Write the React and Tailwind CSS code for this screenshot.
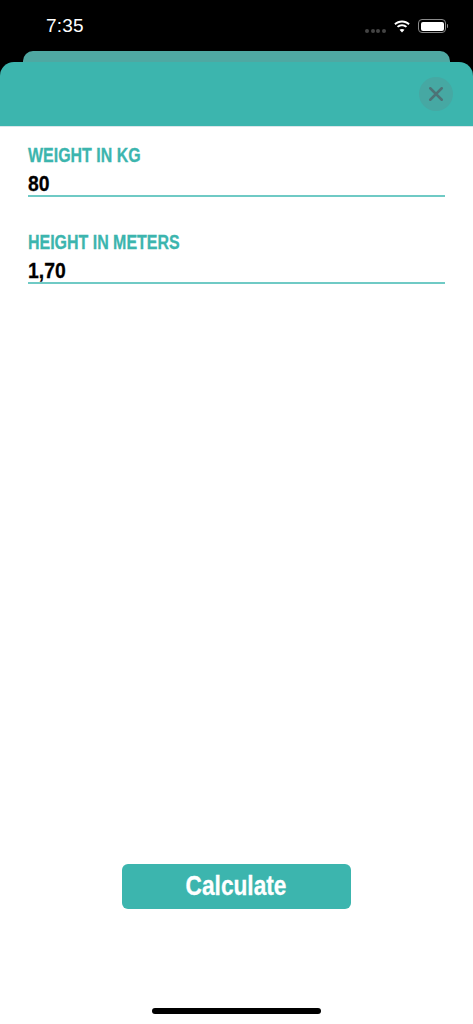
import React from 'react';

function Field({ label, value, className }) {
  return (
    <div className={className}>
      <div className="h-[20px] origin-left scale-x-[0.76] whitespace-nowrap text-[21px] leading-[20px] font-bold text-[#3cb5ae] [-webkit-text-stroke:0.3px_#3cb5ae]">{label}</div>
      <div className="mt-[7px] h-[23px] origin-left scale-x-[0.88] text-[22px] leading-[24px] font-bold text-black [-webkit-text-stroke:0.3px_black]">{value}</div>
      <div className="h-[2px] bg-[#6fcac5]" />
    </div>
  );
}

export default function App() {
  return (
    <div className="flex h-[1024px] w-[473px] flex-col overflow-hidden bg-white font-['Liberation_Sans',Arial,sans-serif]">
      <div className="bg-black">
        <div className="flex h-[51px] items-start justify-between pt-[14px] pr-[25px] pl-[46px]">
          <span className="text-[19px] leading-[23px] font-normal tracking-[0.2px] text-white">7:35</span>
          <div className="mt-[5px] flex items-center">
            <div className="mt-[9px] flex gap-[1.7px]">
              <span className="h-[4px] w-[4px] rounded-full bg-[#444]" />
              <span className="h-[4px] w-[4px] rounded-full bg-[#444]" />
              <span className="h-[4px] w-[4px] rounded-full bg-[#444]" />
              <span className="h-[4px] w-[4px] rounded-full bg-[#444]" />
            </div>
            <svg className="ml-[7px]" width="18" height="13" viewBox="0 0 19 14" fill="white">
              <path d="M9.5 2.6c2.7 0 5.1 1 6.9 2.8l1.4-1.5C15.6 1.8 12.7.5 9.5.5S3.4 1.8 1.2 3.9l1.4 1.5C4.4 3.6 6.8 2.6 9.5 2.6z" />
              <path d="M9.5 6.6c1.6 0 3 .6 4.1 1.6l1.4-1.5C13.5 5.3 11.6 4.5 9.5 4.5s-4 .8-5.5 2.2l1.4 1.5c1.1-1 2.5-1.6 4.1-1.6z" />
              <path d="M9.5 13.5l2.7-2.9c-.7-.6-1.7-1-2.7-1s-2 .4-2.7 1z" />
            </svg>
            <div className="ml-[7px] flex items-center">
              <div className="flex h-[14px] w-[28px] rounded-[4px] border border-[#8a8a8a] p-[1.5px]">
                <div className="flex-1 rounded-[2px] bg-white" />
              </div>
              <div className="ml-[0.5px] h-[4px] w-[1.5px] rounded-r-sm bg-[#8a8a8a]" />
            </div>
          </div>
        </div>
        <div className="mx-[23px] h-[11px] rounded-t-[10px] bg-[#4fa8a2]" />
        <div className="flex h-[64px] items-start justify-end rounded-t-[14px] bg-[#3cb5ae] pt-[15px] pr-[20px]">
          <div className="flex h-[34px] w-[34px] items-center justify-center rounded-full bg-[#46a8a3]">
            <svg width="16" height="16" viewBox="0 0 16 16" fill="none" stroke="#4d7276" strokeWidth="2.5" strokeLinecap="round">
              <path d="M2.25 2.25l11.5 11.5M13.75 2.25l-11.5 11.5" />
            </svg>
          </div>
        </div>
      </div>
      <div className="h-[1px] bg-[#dbe6ea]" />

      <div className="flex flex-1 flex-col px-[28px]">
        <Field label="WEIGHT IN KG" value="80" className="mt-[18px]" />
        <Field label="HEIGHT IN METERS" value="1,70" className="mt-[35px]" />
        <button className="mx-auto mt-[580px] flex h-[45px] w-[229px] items-center justify-center rounded-[6px] bg-[#3cb5ae]">
          <span className="scale-x-[0.84] text-[27px] font-bold text-white [-webkit-text-stroke:0.3px_white]">Calculate</span>
        </button>
        <div className="mx-auto mt-[99px] h-[6px] w-[169px] rounded-full bg-black" />
      </div>
    </div>
  );
}
